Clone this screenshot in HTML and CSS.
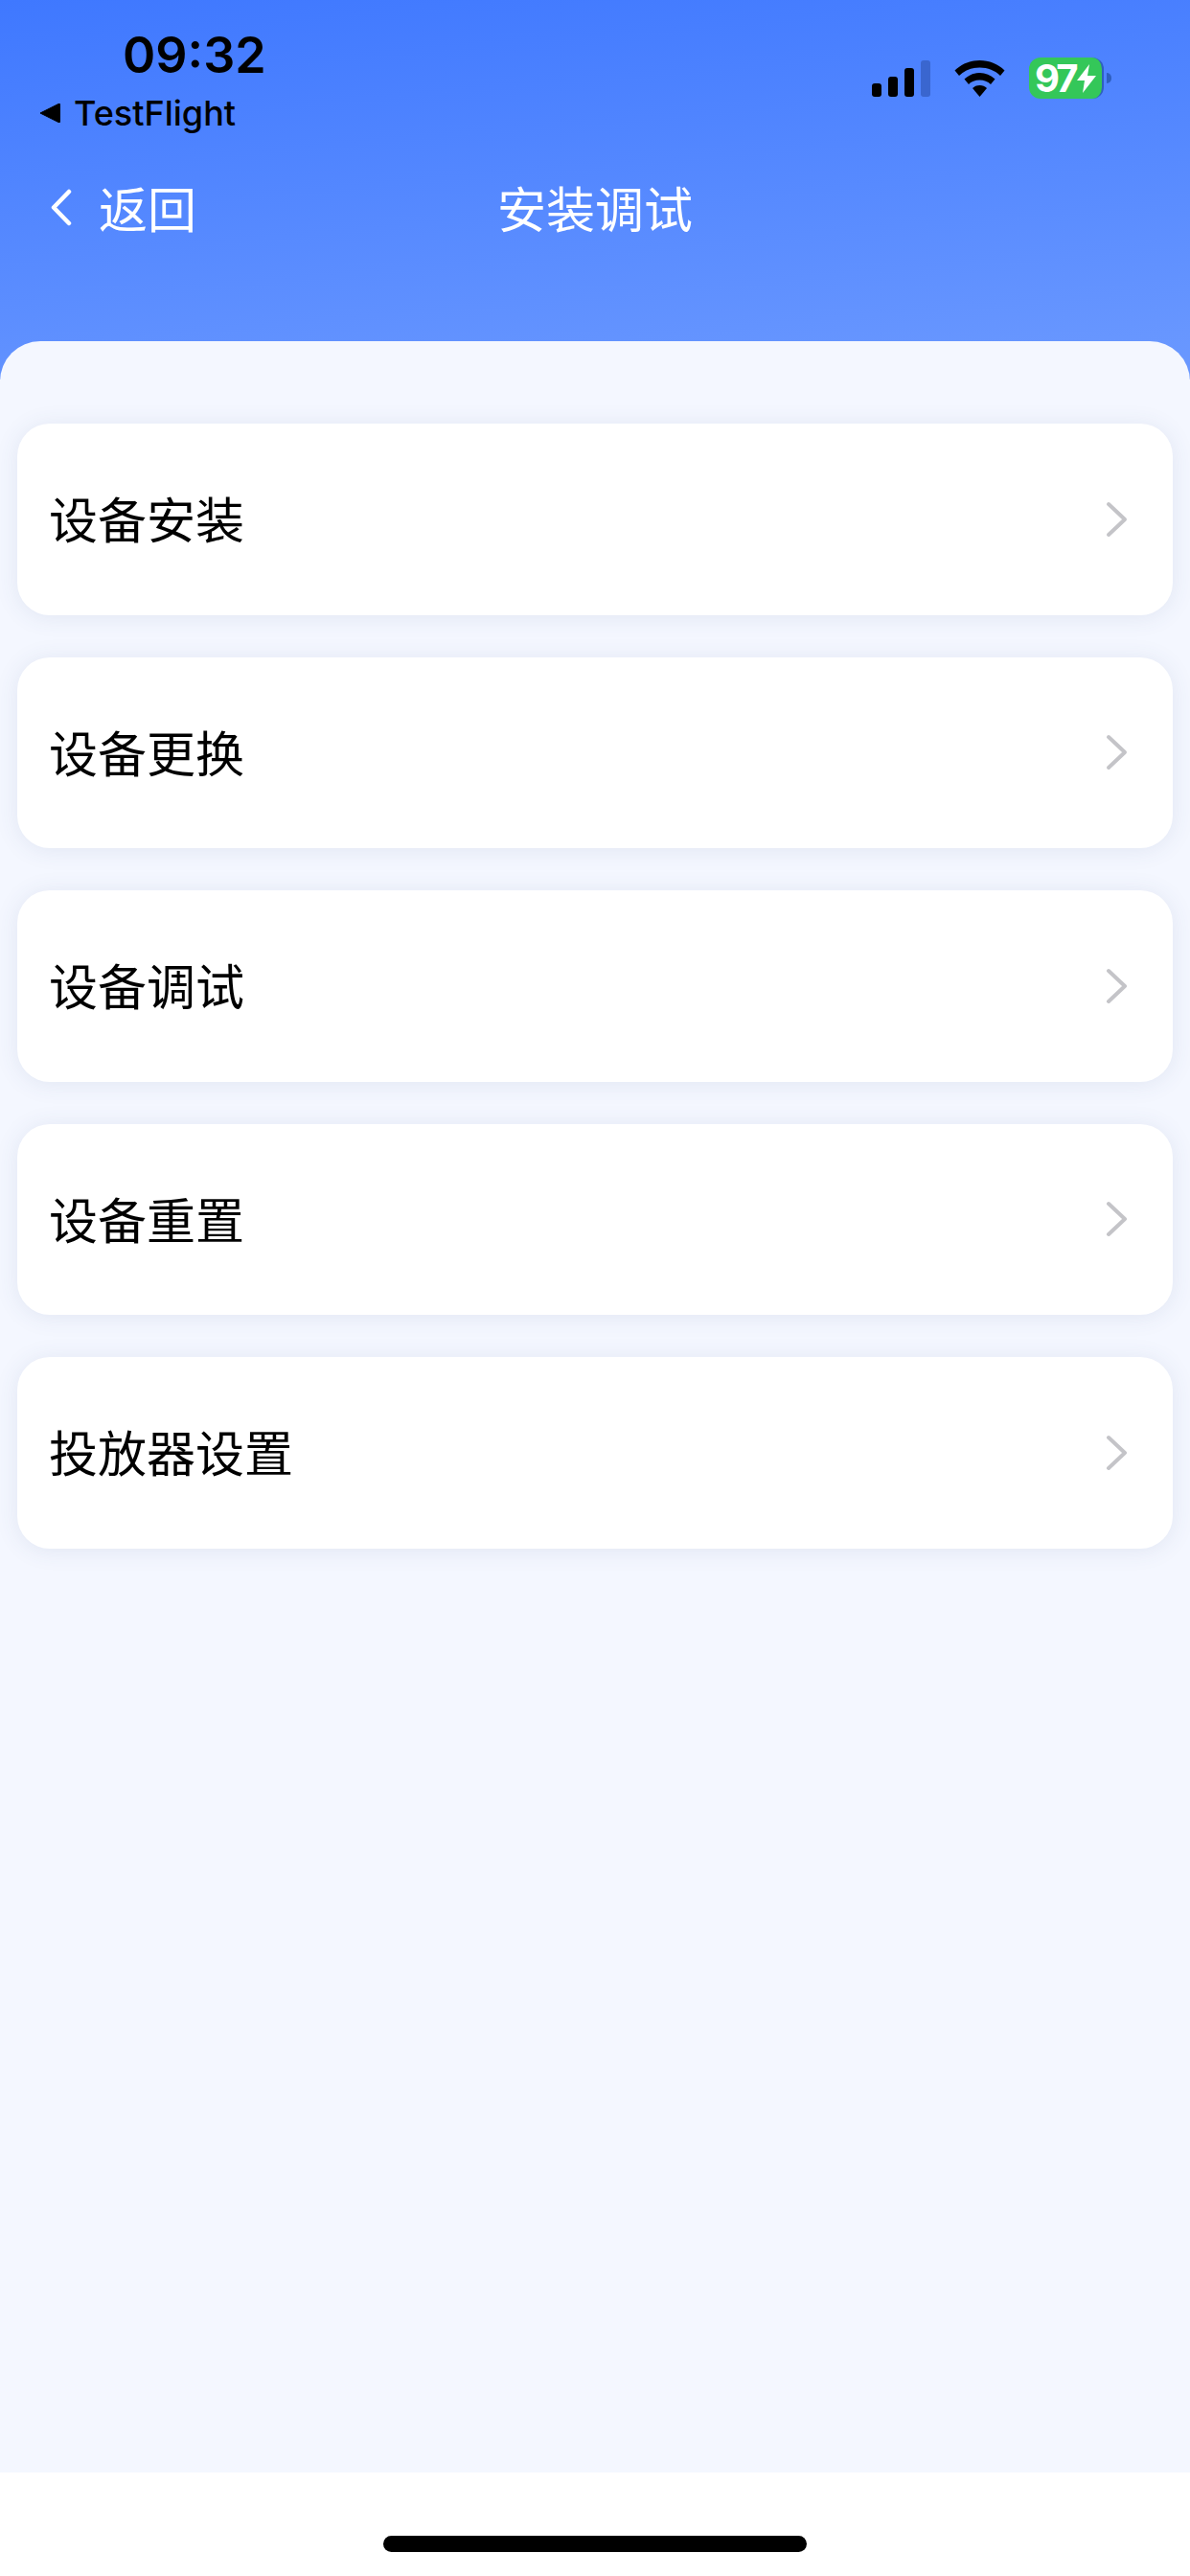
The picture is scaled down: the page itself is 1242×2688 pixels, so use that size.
FILE: index.html
```html
<!DOCTYPE html>
<html lang="zh-CN">
<head>
  <meta charset="UTF-8" />
  <meta name="viewport" content="width=device-width, initial-scale=1.0"/>
  <title>安装调试</title>
  <link rel="stylesheet" href="styles.css">
</head>
<body>

  <header class="top">
    <div class="status">
      <div class="status-left">
        <div class="clock">09:32</div>
        <div class="back-app">
          <svg class="back-arrow" width="22" height="22" viewBox="0 0 22 22"><path d="M1 11 L20 1.500 Q22 0.800 22 3 V19 Q22 21.200 20 20.500 Z" fill="#000" stroke="#000" stroke-width="1" stroke-linejoin="round"/></svg>
          <span>TestFlight</span>
        </div>
      </div>
      <div class="status-right">
        <svg class="signal" width="62" height="38" viewBox="0 0 62 38">
          <rect x="0" y="24" width="10" height="14" rx="3" fill="#000"/>
          <rect x="17" y="17" width="10" height="21" rx="3" fill="#000"/>
          <rect x="34" y="8" width="10" height="30" rx="3" fill="#000"/>
          <rect x="51" y="0" width="10" height="38" rx="3" fill="#3a66cf"/>
        </svg>
        <svg class="wifi" width="53" height="38" viewBox="0 0 53 38">
          <path d="M26.5 0 C16.500 0 7.500 3.800 0.500 10.500 L5 16 C10.500 10.500 18 7.500 26.500 7.500 C35 7.500 42.500 10.500 48 16 L52.500 10.500 C45.500 3.800 36.500 0 26.500 0 Z" fill="#000"/>
          <path d="M26.500 13 C20.500 13 15 15.200 10.500 19.500 L15 25 C18 22 22 20.500 26.500 20.500 C31 20.500 35 22 38 25 L42.500 19.500 C38 15.200 32.500 13 26.500 13 Z" fill="#000"/>
          <path d="M26.500 26 C23.500 26 21 27 19 29 L26.500 38 L34 29 C32 27 29.500 26 26.500 26 Z" fill="#000"/>
        </svg>
        <div class="battery">
          <div class="battery-body">
            <span>97</span>
            <svg class="bolt" width="20" height="30" viewBox="0 0 20 30"><path d="M13 0 L0 17 H8 L6 30 L20 12 H11 Z" fill="#fff"/></svg>
          </div>
          <div class="battery-nub"></div>
        </div>
      </div>
    </div>
    <div class="nav">
      <a class="nav-back" href="#">
        <svg width="23" height="39" viewBox="0 0 23 39"><path d="M20 3 L4 19.500 L20 36" fill="none" stroke="#fff" stroke-width="4.500" stroke-linecap="round" stroke-linejoin="round"/></svg>
        <span>返回</span>
      </a>
      <div class="nav-title">安装调试</div>
    </div>
  </header>

  <main class="sheet">
    <a class="row" href="#">
      <span class="row-label">设备安装</span>
      <svg class="chevron" width="24" height="38" viewBox="0 0 24 38"><path d="M3 3 L20 19 L3 35" fill="none" stroke="#c4c4c8" stroke-width="4" stroke-linecap="round" stroke-linejoin="round"/></svg>
    </a>
    <a class="row" href="#">
      <span class="row-label">设备更换</span>
      <svg class="chevron" width="24" height="38" viewBox="0 0 24 38"><path d="M3 3 L20 19 L3 35" fill="none" stroke="#c4c4c8" stroke-width="4" stroke-linecap="round" stroke-linejoin="round"/></svg>
    </a>
    <a class="row" href="#">
      <span class="row-label">设备调试</span>
      <svg class="chevron" width="24" height="38" viewBox="0 0 24 38"><path d="M3 3 L20 19 L3 35" fill="none" stroke="#c4c4c8" stroke-width="4" stroke-linecap="round" stroke-linejoin="round"/></svg>
    </a>
    <a class="row" href="#">
      <span class="row-label">设备重置</span>
      <svg class="chevron" width="24" height="38" viewBox="0 0 24 38"><path d="M3 3 L20 19 L3 35" fill="none" stroke="#c4c4c8" stroke-width="4" stroke-linecap="round" stroke-linejoin="round"/></svg>
    </a>
    <a class="row" href="#">
      <span class="row-label">投放器设置</span>
      <svg class="chevron" width="24" height="38" viewBox="0 0 24 38"><path d="M3 3 L20 19 L3 35" fill="none" stroke="#c4c4c8" stroke-width="4" stroke-linecap="round" stroke-linejoin="round"/></svg>
    </a>
  </main>

  <footer class="home">
    <div class="home-bar"></div>
  </footer>

</body>
</html>
```

FILE: styles.css
```css
* {
  margin: 0;
  padding: 0;
  box-sizing: border-box;
}

html, body {
  height: 100%;
}

body {
  display: flex;
  flex-direction: column;
  height: 2688px;
  background: #fff;
  font-family: "Noto Sans CJK SC", "Noto Sans", sans-serif;
  color: #000;
}

a {
  color: inherit;
  text-decoration: none;
}

.top {
  height: 396px;
  flex-shrink: 0;
  background: linear-gradient(175deg, #3f78ff 0%, #6796ff 90%, #6a98ff 100%);
}

.status {
  display: flex;
  justify-content: space-between;
  height: 176px;
  padding: 28px 82px 0 41px;
}

.clock {
  margin-left: 87px;
  font-family: Inter, "Liberation Sans", sans-serif;
  font-size: 52px;
  font-weight: 600;
  line-height: 60px;
}

.back-app {
  display: flex;
  align-items: center;
  gap: 14px;
  margin-top: 10px;
  font-family: Inter, "Liberation Sans", sans-serif;
  font-size: 36px;
  font-weight: 500;
  line-height: 40px;
}

.status-right {
  display: flex;
  align-items: flex-start;
  padding-top: 32px;
}

.signal {
  margin-top: 3px;
  margin-right: 24px;
}

.wifi {
  margin-top: 3px;
  margin-right: 25px;
}

.battery {
  display: flex;
  align-items: center;
}

.battery-body {
  display: flex;
  align-items: center;
  gap: 2px;
  width: 78px;
  height: 43px;
  padding-left: 6px;
  background: #34c759;
  border-right: 2px solid #2f5fc0;
  border-radius: 12px;
  color: #fff;
  font-family: Inter, "Liberation Sans", sans-serif;
  font-size: 40px;
  font-weight: 700;
  letter-spacing: -3px;
}

.battery-nub {
  width: 5px;
  height: 11px;
  margin-left: 3px;
  background: #2f5fc0;
  border-radius: 0 6px 6px 0;
}

.nav {
  position: relative;
  display: flex;
  align-items: center;
  justify-content: center;
  height: 80px;
  color: #fff;
  font-size: 51px;
}

.nav-back {
  position: absolute;
  left: 52px;
  top: 0;
  bottom: 0;
  display: flex;
  align-items: center;
  gap: 28px;
}

.sheet {
  flex: 1;
  display: flex;
  flex-direction: column;
  gap: 44px;
  margin-top: -40px;
  padding: 86px 18px 0;
  background: #f4f7ff;
  border-radius: 42px 42px 0 0;
}

.row {
  display: flex;
  align-items: center;
  justify-content: space-between;
  height: 199.5px;
  padding: 0 46px 0 33px;
  background: #fff;
  border-radius: 34px;
  box-shadow: 0 2px 24px rgba(60, 75, 130, 0.1);
  font-size: 51px;
}

.row-label {
  padding-bottom: 3px;
}

.home {
  display: flex;
  justify-content: center;
  height: 108px;
  flex-shrink: 0;
  padding-top: 66px;
  background: #fff;
}

.home-bar {
  width: 442px;
  height: 17px;
  background: #000;
  border-radius: 9px;
}
```
